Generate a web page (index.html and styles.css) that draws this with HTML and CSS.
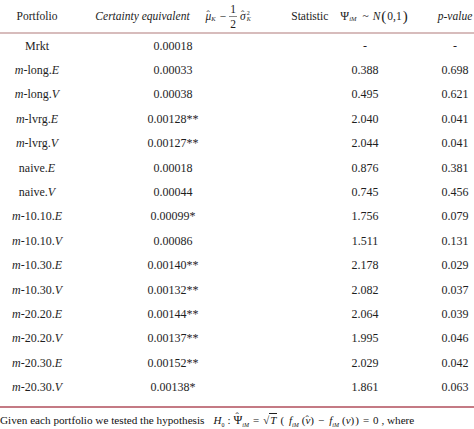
FILE: index.html
```html
<!DOCTYPE html>
<html>
<head>
<meta charset="utf-8">
<link rel="stylesheet" href="styles.css">
</head>
<body>
<div class="page">
  <div class="table">
    <div class="row head">
      <div class="cell c1">Portfolio</div>
      <div class="cell c2"><span class="it">Certainty equivalent</span><span class="math mhead"><span class="it hat">μ</span><sub class="it">K</sub><span class="op">−</span><span class="frac"><span class="num">1</span><span class="den">2</span></span><span class="it hat">σ</span><span class="supsub"><sup>2</sup><sub class="it">K</sub></span></span></div>
      <div class="cell c3 c3h">Statistic<span class="math mstat"><span class="psi">Ψ</span><sub class="it">iM</sub><span class="tilde">~</span><span class="it">N</span><span class="paren">(</span>0,1<span class="paren">)</span></span></div>
      <div class="cell c4"><span class="it">p-value</span></div>
    </div>
    <div class="tbody">
      <div class="row"><div class="cell c1">Mrkt</div><div class="cell c2">0.00018</div><div class="cell c3">-</div><div class="cell c4">-</div></div>
      <div class="row"><div class="cell c1"><span class="it">m</span>-long.<span class="it">E</span></div><div class="cell c2">0.00033</div><div class="cell c3">0.388</div><div class="cell c4">0.698</div></div>
      <div class="row"><div class="cell c1"><span class="it">m</span>-long.<span class="it">V</span></div><div class="cell c2">0.00038</div><div class="cell c3">0.495</div><div class="cell c4">0.621</div></div>
      <div class="row"><div class="cell c1"><span class="it">m</span>-lvrg.<span class="it">E</span></div><div class="cell c2">0.00128**</div><div class="cell c3">2.040</div><div class="cell c4">0.041</div></div>
      <div class="row"><div class="cell c1"><span class="it">m</span>-lvrg.<span class="it">V</span></div><div class="cell c2">0.00127**</div><div class="cell c3">2.044</div><div class="cell c4">0.041</div></div>
      <div class="row"><div class="cell c1">naive.<span class="it">E</span></div><div class="cell c2">0.00018</div><div class="cell c3">0.876</div><div class="cell c4">0.381</div></div>
      <div class="row"><div class="cell c1">naive.<span class="it">V</span></div><div class="cell c2">0.00044</div><div class="cell c3">0.745</div><div class="cell c4">0.456</div></div>
      <div class="row"><div class="cell c1"><span class="it">m</span>-10.10.<span class="it">E</span></div><div class="cell c2">0.00099*</div><div class="cell c3">1.756</div><div class="cell c4">0.079</div></div>
      <div class="row"><div class="cell c1"><span class="it">m</span>-10.10.<span class="it">V</span></div><div class="cell c2">0.00086</div><div class="cell c3">1.511</div><div class="cell c4">0.131</div></div>
      <div class="row"><div class="cell c1"><span class="it">m</span>-10.30.<span class="it">E</span></div><div class="cell c2">0.00140**</div><div class="cell c3">2.178</div><div class="cell c4">0.029</div></div>
      <div class="row"><div class="cell c1"><span class="it">m</span>-10.30.<span class="it">V</span></div><div class="cell c2">0.00132**</div><div class="cell c3">2.082</div><div class="cell c4">0.037</div></div>
      <div class="row"><div class="cell c1"><span class="it">m</span>-20.20.<span class="it">E</span></div><div class="cell c2">0.00144**</div><div class="cell c3">2.064</div><div class="cell c4">0.039</div></div>
      <div class="row"><div class="cell c1"><span class="it">m</span>-20.20.<span class="it">V</span></div><div class="cell c2">0.00137**</div><div class="cell c3">1.995</div><div class="cell c4">0.046</div></div>
      <div class="row"><div class="cell c1"><span class="it">m</span>-20.30.<span class="it">E</span></div><div class="cell c2">0.00152**</div><div class="cell c3">2.029</div><div class="cell c4">0.042</div></div>
      <div class="row"><div class="cell c1"><span class="it">m</span>-20.30.<span class="it">V</span></div><div class="cell c2">0.00138*</div><div class="cell c3">1.861</div><div class="cell c4">0.063</div></div>
    </div>
  </div>
  <p class="note">Given each portfolio we tested the hypothesis<span class="fml"><span class="it">H</span><sub>0</sub><span class="colon">:</span><span class="hat fhatcap psi">Ψ</span><sub class="it">iM</sub><span class="eq">=</span><span class="sqrt">√<span class="over it">T</span></span><span class="bp">(</span><span class="it f">f</span><sub class="it">iM</sub><span class="sp">(</span><span class="it hat fhat">v</span>)<span class="eq">−</span><span class="it f">f</span><sub class="it">iM</sub><span class="sp">(</span><span class="it">v</span>)<span class="bp r">)</span><span class="eq">=</span>0</span> , where</p>
</div>
</body>
</html>
```

FILE: styles.css
```css
html, body {
  margin: 0;
  padding: 0;
  background: #ffffff;
  overflow: hidden;
}

body {
  font-family: "Liberation Serif", "Times New Roman", serif;
  color: #1e1e1e;
}

.page {
  width: 474px;
  height: 429px;
  overflow: hidden;
}

.table {
  width: 480px;
}

.row {
  display: grid;
  grid-template-columns: 74px 198px 168px 30px;
  height: 24.4px;
  align-items: center;
  font-size: 12px;
}

.cell {
  display: flex;
  justify-content: center;
  align-items: center;
  white-space: nowrap;
}

.c3 {
  padding-left: 18px;
}

.head {
  height: 32px;
  border-bottom: 2px solid #d7bcbc;
  font-size: 11.5px;
  color: #1c1c1c;
}

.head .c3h {
  padding-left: 0;
  padding-right: 12px;
}

.tbody {
  padding-bottom: 6px;
  border-bottom: 2px solid #c47a84;
}

.it {
  font-style: italic;
}

.math {
  display: inline-flex;
  align-items: center;
  font-style: normal;
}

.mhead {
  margin-left: 16px;
}

.mstat {
  margin-left: 12px;
}

sub, sup {
  font-size: 6.5px;
  line-height: 1;
}

sub {
  vertical-align: -3px;
}

.math sub {
  position: relative;
  top: 3px;
  vertical-align: baseline;
}

.hat {
  position: relative;
  display: inline-block;
}

.hat::after {
  content: "\02C6";
  position: absolute;
  left: 1px;
  top: 0;
  font-style: normal;
  font-size: 10px;
  line-height: 1;
}

.fhatcap::after {
  top: 0;
  left: 2px;
}

.fhat::after {
  top: 3px;
  left: 0;
}

.op {
  margin: 0 3px 0 4px;
}

.frac {
  display: inline-flex;
  flex-direction: column;
  align-items: center;
  font-size: 11.5px;
  line-height: 12px;
  margin-right: 3px;
}

.frac .num {
  border-bottom: 1px solid #888888;
  padding: 0 1px 1px 1px;
}

.frac .den {
  padding-top: 1px;
}

.supsub {
  display: inline-flex;
  flex-direction: column;
  line-height: 1;
  margin-left: 1px;
}

.supsub sup, .supsub sub {
  vertical-align: baseline;
  position: static;
  font-size: 6px;
}

.psi {
  font-size: 12px;
}

.tilde {
  margin: 0 4px 0 6px;
}

.paren {
  font-size: 15px;
  line-height: 1;
  margin: 0 1px;
}

.note {
  margin: 4px 0 0 0;
  font-size: 11.2px;
  line-height: 16px;
  color: #111111;
  white-space: nowrap;
}

.fml {
  display: inline-block;
  margin-left: 9px;
  font-size: 11px;
}

.fml sub {
  font-size: 6px;
}

.colon {
  margin: 0 3px 0 3px;
}

.eq {
  margin: 0 4px;
}

.sqrt {
  display: inline-block;
}

.over {
  border-top: 1px solid #1e1e1e;
  padding: 0 1px;
}

.bp {
  margin: 0 4px 0 3px;
}

.bp.r {
  margin: 0 0 0 1px;
}

.sp {
  margin-left: 3px;
}

.f {
  margin-left: 1px;
}
```
